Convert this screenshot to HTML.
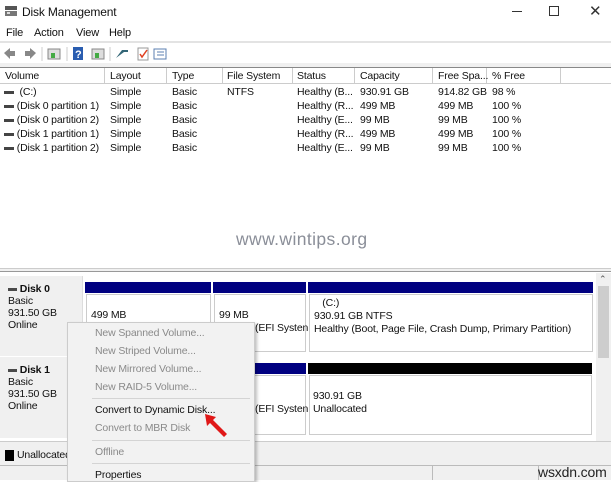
<!DOCTYPE html>
<html><head><meta charset="utf-8"><style>
*{margin:0;padding:0;box-sizing:border-box}
body{width:611px;height:480px;overflow:hidden;background:#fff;font-family:"Liberation Sans",sans-serif;font-size:10.5px;letter-spacing:-0.15px;color:#111;position:relative}
.a{position:absolute;white-space:nowrap}
.g{color:#8a8a8a}
</style></head><body>
<div class="a" style="left:0;top:0;width:611px;height:24px;background:#fff"></div>
<svg class="a" style="left:4px;top:5px" width="14" height="13"><rect x="1" y="1" width="12" height="4" fill="#555"/><rect x="1" y="6" width="12" height="5" fill="#777"/><rect x="3" y="7" width="3" height="2" fill="#ddd"/></svg>
<div class="a" style="left:22px;top:5px;font-size:12px">Disk Management</div>
<div class="a" style="left:512px;top:11px;width:10px;height:1px;background:#333"></div>
<div class="a" style="left:549px;top:6px;width:10px;height:10px;border:1px solid #333"></div>
<div class="a" style="left:589px;top:2px;font-size:15px;color:#333">✕</div>
<div class="a" style="left:6px;top:27px;font-size:11px">File</div>
<div class="a" style="left:34px;top:27px;font-size:11px">Action</div>
<div class="a" style="left:76px;top:27px;font-size:11px">View</div>
<div class="a" style="left:109px;top:27px;font-size:11px">Help</div>
<div class="a" style="left:0;top:41px;width:611px;height:2px;background:#e3e3e3"></div>
<svg class="a" style="left:2px;top:46px" width="170" height="16">
<path d="M2 7 L8 2 V5 H13 V10 H8 V13Z" fill="#888"/>
<path d="M34 7 L28 2 V5 H23 V10 H28 V13Z" fill="#888"/>
<line x1="40" y1="1" x2="40" y2="15" stroke="#ccc"/>
<rect x="46" y="3" width="12" height="10" fill="#ddd" stroke="#888"/><rect x="49" y="7" width="4" height="5" fill="#4a4"/>
<line x1="65" y1="1" x2="65" y2="15" stroke="#ccc"/>
<rect x="71" y="1" width="10" height="13" fill="#2a5db0"/><text x="73" y="12" fill="#fff" font-size="11" font-family="Liberation Sans" font-weight="bold">?</text>
<rect x="90" y="3" width="12" height="10" fill="#ddd" stroke="#888"/><rect x="93" y="7" width="4" height="5" fill="#4a4"/>
<line x1="108" y1="1" x2="108" y2="15" stroke="#ccc"/>
<path d="M114 12 L122 6 L126 6 L126 4 L120 4Z" fill="#367"/>
<rect x="136" y="2" width="10" height="12" fill="#fff" stroke="#999"/><path d="M138 8 L140 11 L145 4" stroke="#e04020" fill="none" stroke-width="1.5"/>
<rect x="152" y="3" width="12" height="10" fill="#fff" stroke="#5b7fb0"/><line x1="155" y1="6" x2="162" y2="6" stroke="#5b7fb0"/><line x1="155" y1="9" x2="162" y2="9" stroke="#5b7fb0"/>
</svg>
<div class="a" style="left:0;top:63px;width:611px;height:4px;background:#f0f0f0"></div>
<div class="a" style="left:0;top:67px;width:611px;height:17px;border-top:1px solid #888;border-bottom:1px solid #ccc;background:#fff"></div>
<div class="a" style="left:104px;top:68px;width:1px;height:15px;background:#ccc"></div>
<div class="a" style="left:166px;top:68px;width:1px;height:15px;background:#ccc"></div>
<div class="a" style="left:222px;top:68px;width:1px;height:15px;background:#ccc"></div>
<div class="a" style="left:292px;top:68px;width:1px;height:15px;background:#ccc"></div>
<div class="a" style="left:354px;top:68px;width:1px;height:15px;background:#ccc"></div>
<div class="a" style="left:432px;top:68px;width:1px;height:15px;background:#ccc"></div>
<div class="a" style="left:486px;top:68px;width:1px;height:15px;background:#ccc"></div>
<div class="a" style="left:560px;top:68px;width:1px;height:15px;background:#ccc"></div>
<div class="a" style="left:5px;top:70px">Volume</div>
<div class="a" style="left:110px;top:70px">Layout</div>
<div class="a" style="left:172px;top:70px">Type</div>
<div class="a" style="left:227px;top:70px">File System</div>
<div class="a" style="left:297px;top:70px">Status</div>
<div class="a" style="left:360px;top:70px">Capacity</div>
<div class="a" style="left:438px;top:70px">Free Spa...</div>
<div class="a" style="left:492px;top:70px">% Free</div>
<div class="a" style="left:4px;top:85px;line-height:14px">
<span style="display:inline-block;width:10px;height:3px;background:#444;vertical-align:middle"></span>&nbsp;&nbsp;(C:)<br>
<span style="display:inline-block;width:10px;height:3px;background:#444;vertical-align:middle"></span> (Disk 0 partition 1)<br>
<span style="display:inline-block;width:10px;height:3px;background:#444;vertical-align:middle"></span> (Disk 0 partition 2)<br>
<span style="display:inline-block;width:10px;height:3px;background:#444;vertical-align:middle"></span> (Disk 1 partition 1)<br>
<span style="display:inline-block;width:10px;height:3px;background:#444;vertical-align:middle"></span> (Disk 1 partition 2)</div>
<div class="a" style="left:110px;top:85px;line-height:14px">Simple<br>Simple<br>Simple<br>Simple<br>Simple</div>
<div class="a" style="left:172px;top:85px;line-height:14px">Basic<br>Basic<br>Basic<br>Basic<br>Basic</div>
<div class="a" style="left:227px;top:85px;line-height:14px">NTFS</div>
<div class="a" style="left:297px;top:85px;line-height:14px">Healthy (B...<br>Healthy (R...<br>Healthy (E...<br>Healthy (R...<br>Healthy (E...</div>
<div class="a" style="left:360px;top:85px;line-height:14px">930.91 GB<br>499 MB<br>99 MB<br>499 MB<br>99 MB</div>
<div class="a" style="left:438px;top:85px;line-height:14px">914.82 GB<br>499 MB<br>99 MB<br>499 MB<br>99 MB</div>
<div class="a" style="left:492px;top:85px;line-height:14px">98 %<br>100 %<br>100 %<br>100 %<br>100 %</div>
<div class="a" style="left:236px;top:229px;font-size:17.5px;color:#8a8e98;letter-spacing:0.4px">www.wintips.org</div>
<div class="a" style="left:0;top:268px;width:611px;height:4px;background:#f0f0f0;border-top:1px solid #ccc;border-bottom:1px solid #999"></div>
<div class="a" style="left:0;top:276px;width:83px;height:80px;background:#f0f0f0;border-right:1px solid #ddd"></div>
<div class="a" style="left:0;top:357px;width:83px;height:81px;background:#f0f0f0;border-right:1px solid #ddd"></div>
<div class="a" style="left:8px;top:283px;line-height:12px"><span style="display:inline-block;width:9px;height:3px;background:#4a4a4a;vertical-align:middle"></span><b> Disk 0</b><br>Basic<br>931.50 GB<br>Online</div>
<div class="a" style="left:8px;top:364px;line-height:12px"><span style="display:inline-block;width:9px;height:3px;background:#4a4a4a;vertical-align:middle"></span><b> Disk 1</b><br>Basic<br>931.50 GB<br>Online</div>
<div class="a" style="left:85px;top:282px;width:126px;height:11px;background:#000080"></div>
<div class="a" style="left:213px;top:282px;width:93px;height:11px;background:#000080"></div>
<div class="a" style="left:308px;top:282px;width:285px;height:11px;background:#000080"></div>
<div class="a" style="left:86px;top:294px;width:125px;height:58px;border:1px solid #ccc"></div>
<div class="a" style="left:214px;top:294px;width:92px;height:58px;border:1px solid #ccc"></div>
<div class="a" style="left:309px;top:294px;width:284px;height:58px;border:1px solid #ccc"></div>
<div class="a" style="left:91px;top:309px">499 MB</div>
<div class="a" style="left:219px;top:309px">99 MB</div>
<div class="a" style="left:255px;top:322px">(EFI Systen</div>
<div class="a" style="left:314px;top:297px;line-height:13px">&nbsp;&nbsp;&nbsp;(C:)<br>930.91 GB NTFS<br>Healthy (Boot, Page File, Crash Dump, Primary Partition)</div>
<div class="a" style="left:213px;top:363px;width:93px;height:11px;background:#000080"></div>
<div class="a" style="left:308px;top:363px;width:284px;height:11px;background:#000"></div>
<div class="a" style="left:214px;top:375px;width:92px;height:60px;border:1px solid #ccc"></div>
<div class="a" style="left:309px;top:375px;width:283px;height:60px;border:1px solid #ccc"></div>
<div class="a" style="left:255px;top:403px">(EFI Systen</div>
<div class="a" style="left:313px;top:390px;line-height:13px">930.91 GB<br>Unallocated</div>
<div class="a" style="left:596px;top:273px;width:15px;height:168px;background:#f0f0f0"></div>
<div class="a" style="left:598px;top:286px;width:11px;height:72px;background:#cdcdcd"></div>
<div class="a" style="left:599px;top:274px;font-size:9px;color:#555">&#8963;</div>
<div class="a" style="left:599px;top:436px;font-size:9px;color:#555">&#8964;</div>
<div class="a" style="left:0;top:441px;width:611px;height:24px;background:#f0f0f0;border-top:1px solid #ccc"></div>
<div class="a" style="left:5px;top:450px;width:9px;height:11px;background:#000"></div>
<div class="a" style="left:17px;top:449px">Unallocated</div>
<div class="a" style="left:0;top:465px;width:611px;height:15px;background:#f0f0f0;border-top:1px solid #bbb"></div>
<div class="a" style="left:432px;top:466px;width:1px;height:14px;background:#bbb"></div>
<div class="a" style="left:538px;top:466px;width:1px;height:14px;background:#bbb"></div>
<div class="a" style="left:538px;top:464px;font-size:14px;color:#222">wsxdn.com</div>
<div class="a" style="left:67px;top:322px;width:188px;height:160px;background:#f2f2f2;border:1px solid #ccc;box-shadow:2px 2px 3px rgba(0,0,0,.25)"></div>
<div class="a g" style="left:95px;top:327px">New Spanned Volume...</div>
<div class="a g" style="left:95px;top:345px">New Striped Volume...</div>
<div class="a g" style="left:95px;top:363px">New Mirrored Volume...</div>
<div class="a g" style="left:95px;top:381px">New RAID-5 Volume...</div>
<div class="a" style="left:92px;top:398px;width:158px;height:1px;background:#d4d4d4"></div>
<div class="a" style="left:95px;top:404px">Convert to Dynamic Disk...</div>
<div class="a g" style="left:95px;top:422px">Convert to MBR Disk</div>
<div class="a" style="left:92px;top:440px;width:158px;height:1px;background:#d4d4d4"></div>
<div class="a g" style="left:95px;top:446px">Offline</div>
<div class="a" style="left:92px;top:463px;width:158px;height:1px;background:#d4d4d4"></div>
<div class="a" style="left:95px;top:469px">Properties</div>
<svg class="a" style="left:202px;top:411px" width="28" height="28"><path d="M3 3 L14 6 L11 9 L25 23 L22 26 L8 12 L5 15Z" fill="#e01818"/></svg>
</body></html>
